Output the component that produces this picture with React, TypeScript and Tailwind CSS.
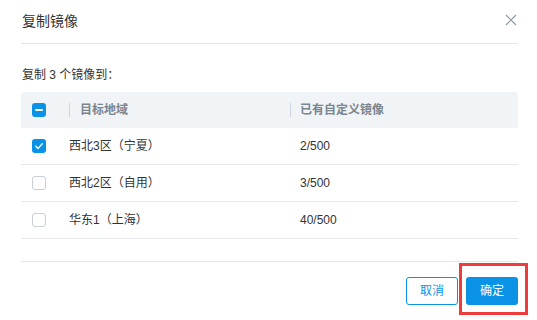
import * as React from "react";

const rows = [
  { name: "西北3区（宁夏）", count: "2/500", checked: true },
  { name: "西北2区（自用）", count: "3/500", checked: false },
  { name: "华东1（上海）", count: "40/500", checked: false },
];

function Checkbox({ state }: { state: "checked" | "mixed" | "none" }) {
  if (state === "none") {
    return <span className="block w-[14px] h-[14px] rounded-[3px] border border-[#c9cfd6] bg-white" />;
  }
  return (
    <span className="flex items-center justify-center w-[14px] h-[14px] rounded-[3px] bg-[#0a93e6]">
      {state === "checked" ? (
        <svg width="10" height="10" viewBox="0 0 10 10" fill="none">
          <path d="M1.8 5.2 L4.1 7.4 L8.3 2.8" stroke="white" strokeWidth="1.4" strokeLinecap="round" strokeLinejoin="round" />
        </svg>
      ) : (
        <span className="block w-[8px] h-[2px] bg-white rounded-[1px]" />
      )}
    </span>
  );
}

export default function App() {
  return (
    <div
      className="w-[537px] h-[320px] bg-white text-[12px] text-[#333]"
      style={{ fontFamily: '"Liberation Sans", "Noto Sans CJK SC", sans-serif' }}
    >
      <div className="pl-[21px] pr-[19px]">
        <div className="h-[44px] flex items-center justify-between border-b border-[#e4e7ea]">
          <span className="text-[14px] pl-[1px] text-[#333]">复制镜像</span>
          <svg width="12" height="12" viewBox="0 0 12 12" className="mr-[1px] mb-[3px]">
            <path d="M1 1 L11 11 M11 1 L1 11" stroke="#8f99a3" strokeWidth="1.2" />
          </svg>
        </div>

        <div className="mt-[22px] mb-[8px] pl-[1px] leading-[18px]">复制 3 个镜像到：</div>

        <div>
          <div className="flex items-center h-[36px] bg-[#f1f4f6] rounded-t-[4px] text-[#7b858e] font-bold">
            <div className="w-[37px] pl-[11px]">
              <Checkbox state="mixed" />
            </div>
            <div className="flex-1 flex items-center">
              <span className="ml-[11px] w-px h-[14px] bg-[#cfd5db]" />
              <span className="ml-[10px]">目标地域</span>
            </div>
            <div className="w-[228px] flex items-center">
              <span className="w-px h-[14px] bg-[#cfd5db]" />
              <span className="ml-[9px]">已有自定义镜像</span>
            </div>
          </div>
          {rows.map((r) => (
            <div key={r.name} className="flex items-center h-[37px] border-b border-[#e6e9ec]">
              <div className="w-[37px] pl-[11px]">
                <Checkbox state={r.checked ? "checked" : "none"} />
              </div>
              <div className="flex-1 pl-[11px]">{r.name}</div>
              <div className="w-[228px] pl-[10px]">{r.count}</div>
            </div>
          ))}
        </div>

        <div className="mt-[22px] border-t border-[#e4e7ea] pt-[15px] flex justify-end items-center gap-[8px]">
          <button className="w-[52px] h-[28px] rounded-[3px] border border-[#0a93e6] text-[#0a93e6] bg-white">
            取消
          </button>
          <div className="relative">
            <button className="w-[52px] h-[28px] rounded-[3px] bg-[#0a93e6] text-white">确定</button>
            <span className="absolute left-[-7px] top-[-14px] right-[-10px] bottom-[-10px] border-[3px] border-[#ee3b3b] pointer-events-none" />
          </div>
        </div>
      </div>
    </div>
  );
}
